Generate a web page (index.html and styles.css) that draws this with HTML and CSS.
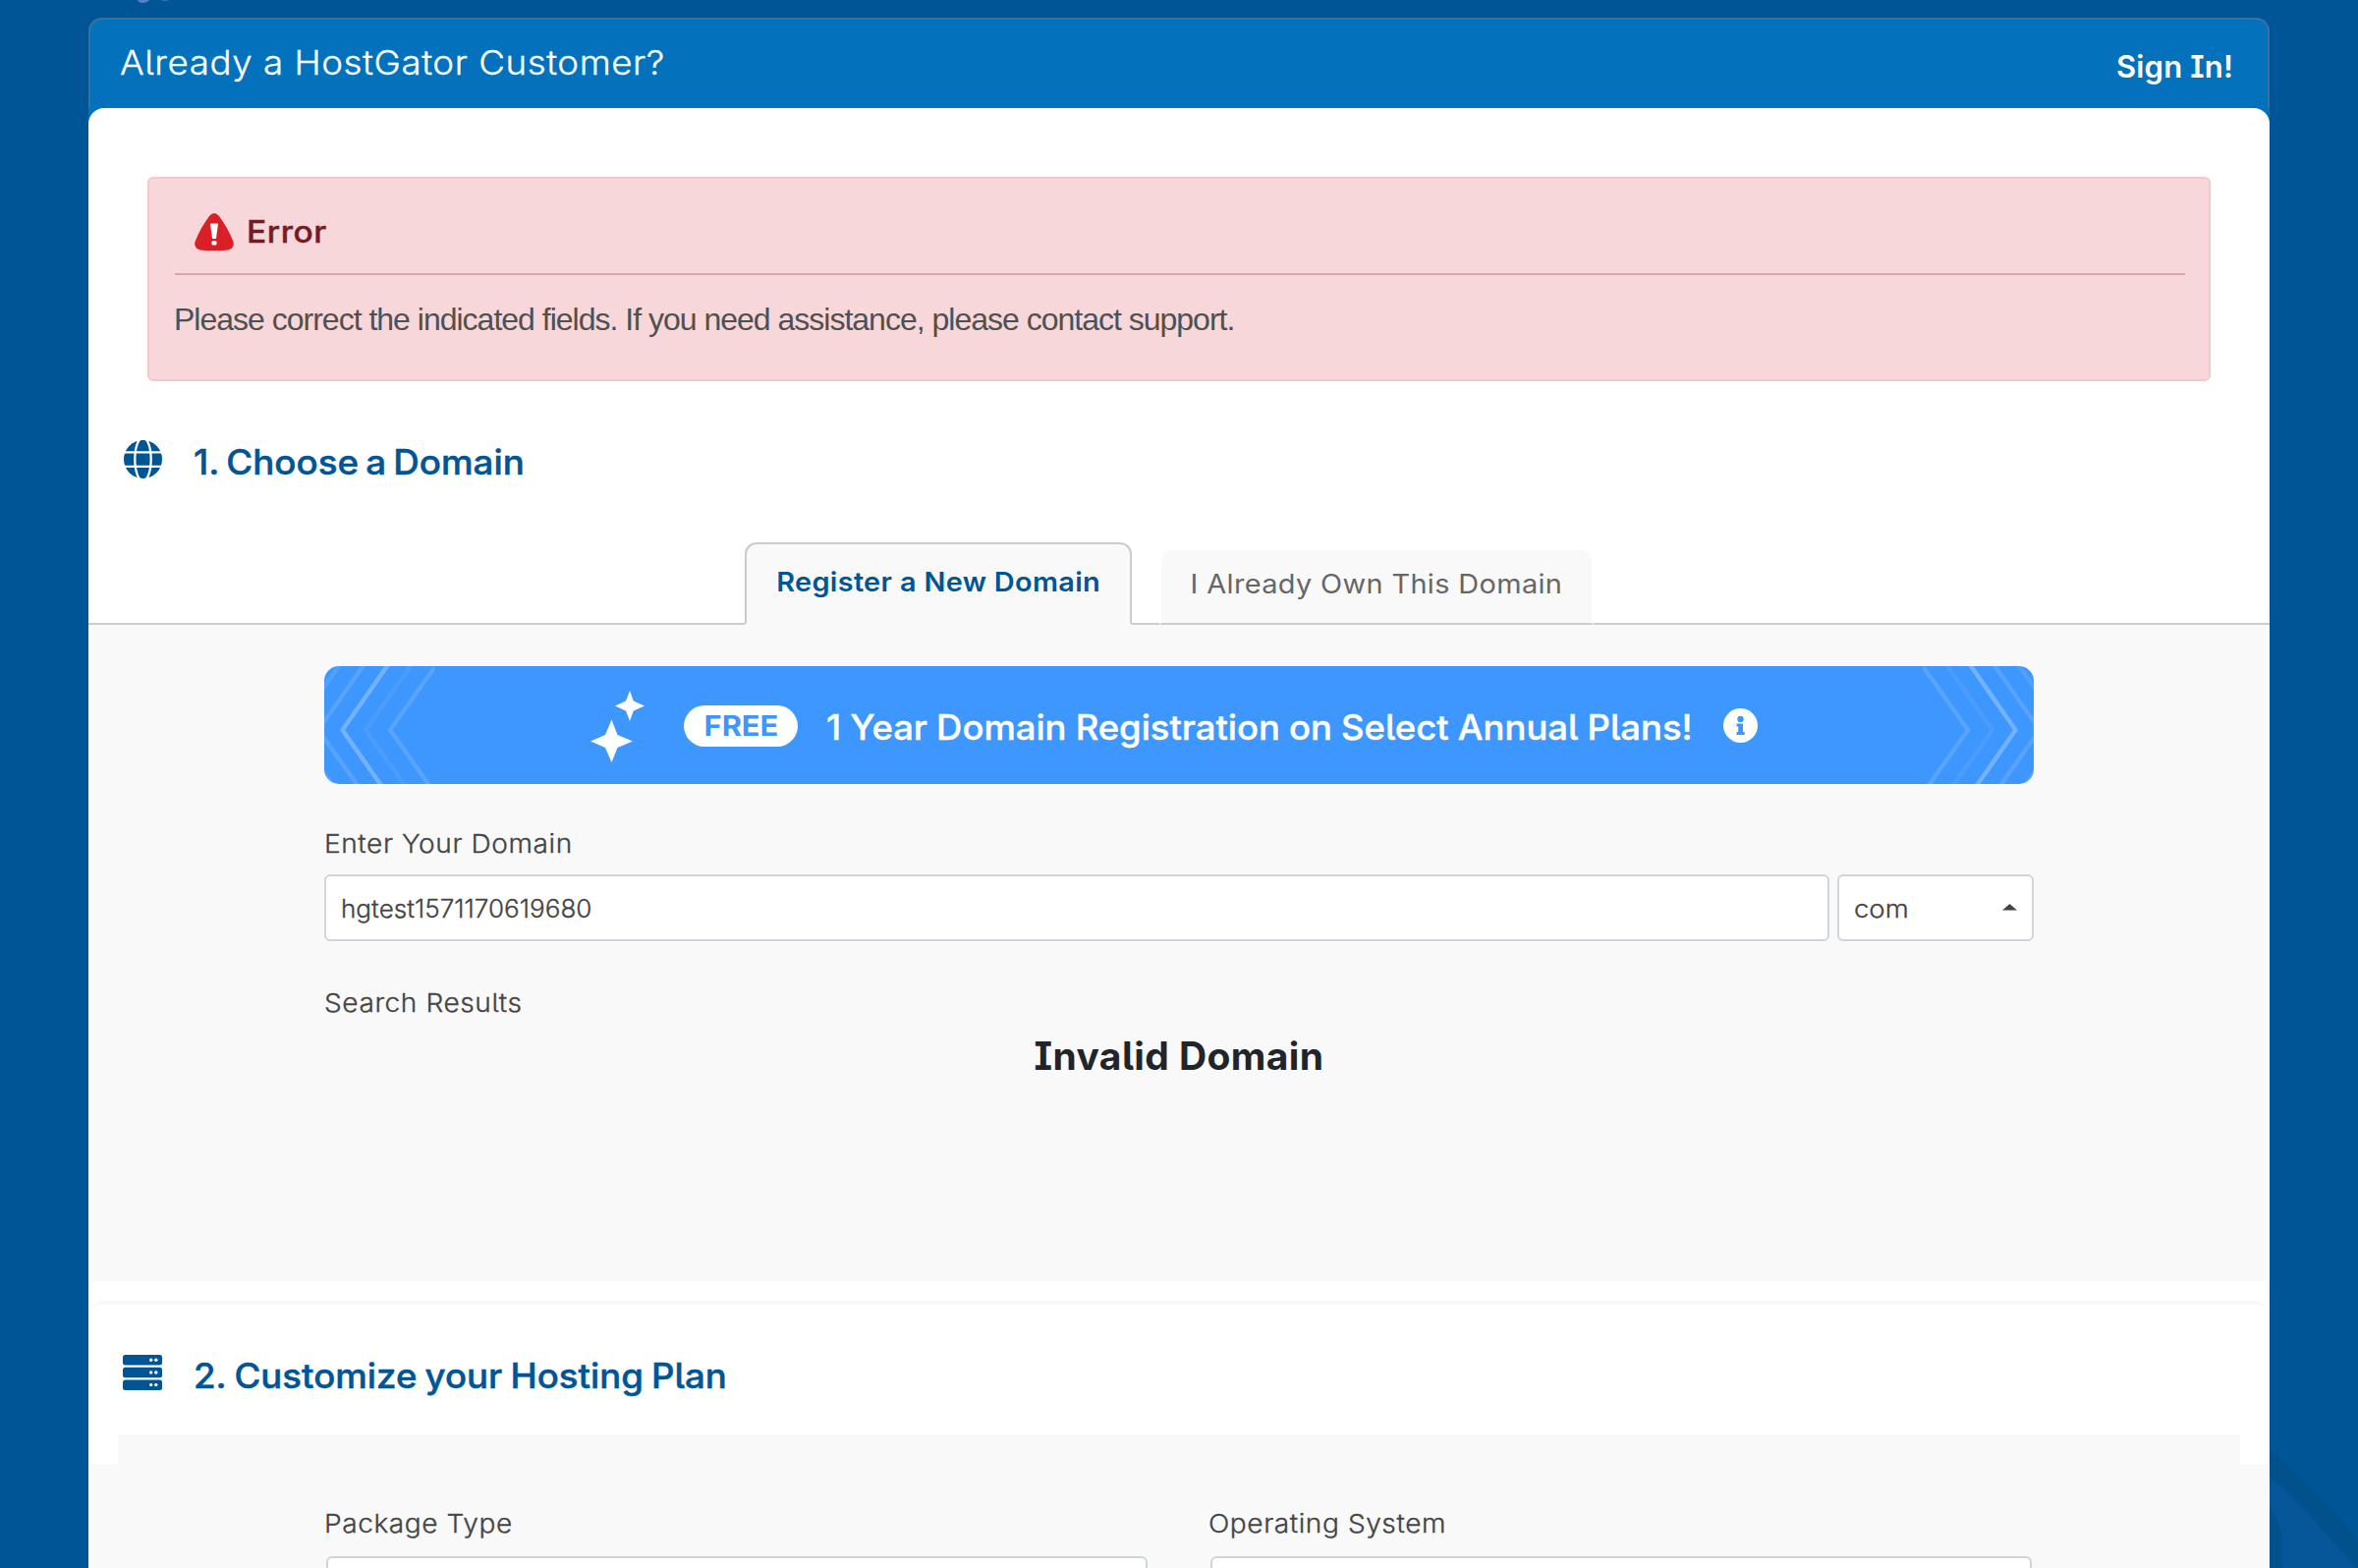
FILE: index.html
```html
<!DOCTYPE html>
<html lang="en">
<head>
<meta charset="utf-8">
<title>HostGator Signup</title>
<link rel="stylesheet" href="styles.css">
</head>
<body>
<svg class="deco-logo" width="40" height="4" viewBox="0 0 40 4"><path d="M0 0H12Q10 3 5 3Q1 3 0 0Z" fill="#4f83c6"/><path d="M24 0H32Q28 2 24 0Z" fill="#3b76bb"/></svg>
<svg class="deco-art" width="90" height="136" viewBox="0 0 90 136"><path d="M0 45L12 54Q45 84 90 136V136H0Z" fill="#055799"/><path d="M0 16Q40 48 90 106V138Q32 70 0 43Z" fill="#00518c"/><path d="M0 73Q13 92 13 112L12 126L20 160H0Z" fill="#00518c"/></svg>
<main class="signup">
  <header class="signin-bar">
    <span class="signin-question">Already a HostGator Customer?</span>
    <a class="signin-link">Sign In!</a>
  </header>
  <div class="card">
    <div class="alert">
      <div class="alert-title">
        <svg width="40" height="38" viewBox="0 0 40 38"><path d="M15 3Q20 -3 25 3Q34 15 39.500 29Q41 36 34 37.500Q20 39 6 37.500Q-1 36 .5 29Q6 15 15 3Z" fill="#db1f26"/><path d="M16 10.500H24L22 26H18Z" fill="#fff"/><rect x="17.500" y="28" width="5" height="4.500" rx="1.500" fill="#fff"/></svg>
        <span class="alert-name">Error</span>
      </div>
      <p class="alert-text">Please correct the indicated fields. If you need assistance, please contact support.</p>
    </div>

    <div class="section-head">
      <svg class="section-icon" width="39" height="39" viewBox="0 0 39 39"><circle cx="19.500" cy="19.500" r="19.500" fill="#005596"/><g fill="none" stroke="#fff" stroke-width="2.300"><path d="M0 12.400H39M0 26.800H39"/><ellipse cx="19.500" cy="19.500" rx="8.200" ry="22"/></g></svg>
      <h2 class="section-title title-domain">1. Choose a Domain</h2>
    </div>

    <nav class="tabs">
      <a class="tab tab-active"><span class="tab-text">Register a New Domain</span></a>
      <a class="tab tab-idle"><span class="tab-text">I Already Own This Domain</span></a>
    </nav>

    <section class="panel">
      <div class="banner">
        <svg class="chevrons" width="120" height="120" viewBox="0 0 120 120"><g fill="none" stroke="#fff" stroke-width="4.500" stroke-linejoin="round" stroke-linecap="round"><path d="M15 0L-31 65L8 120" opacity=".1"/><path d="M39.500 0L-6 65L33 120" opacity=".13"/><path d="M64 0L18.500 65L57 120" opacity=".27"/><path d="M88 0L42 65L81 120" opacity=".07"/><path d="M111 3L67 65L106 120" opacity=".14"/></g></svg>
        <svg class="sparkles" width="56" height="73" viewBox="0 0 56 73"><path fill="#fff" d="M40 0L43.800 10.500L55 15.500L43.800 20.500L40 31L36 20.500L25 15.500L36 10.500ZM21.500 29.500L27.500 45L43 51.500L27.500 58L21.500 73L15 58L0 51.500L15 45Z"/></svg>
        <span class="pill"><span class="pill-text">FREE</span></span>
        <span class="banner-text">1 Year Domain Registration on Select Annual Plans!</span>
        <svg class="info" width="35" height="35" viewBox="0 0 35 35"><circle cx="17.500" cy="17.500" r="17.500" fill="#fff"/><circle cx="17.500" cy="11" r="3.200" fill="#3e96ff"/><path fill="#3e96ff" d="M13.500 15.500H20V24H21.700V27H13.500V24H15.200V18.500H13.500Z"/></svg>
        <svg class="chevrons chevrons-right" width="120" height="120" viewBox="0 0 120 120"><g fill="none" stroke="#fff" stroke-width="4.500" stroke-linejoin="round" stroke-linecap="round"><path d="M15 0L-31 65L8 120" opacity=".1"/><path d="M39.500 0L-6 65L33 120" opacity=".13"/><path d="M64 0L18.500 65L57 120" opacity=".27"/><path d="M88 0L42 65L81 120" opacity=".07"/><path d="M111 3L67 65L106 120" opacity=".14"/></g></svg>
      </div>
      <label class="label domain-label">Enter Your Domain</label>
      <div class="domain-row">
        <div class="field domain-input"><span class="field-text">hgtest1571170619680</span></div>
        <div class="field domain-ext"><span class="field-text ext-text">com</span><svg width="15" height="7" viewBox="0 0 15 7"><path d="M0 6.500L7.500 0L15 6.500Z" fill="#444"/></svg></div>
      </div>
      <div class="label results-label">Search Results</div>
      <h3 class="invalid">Invalid Domain</h3>
    </section>

    <section class="plan">
      <div class="section-head plan-head">
        <svg class="section-icon" width="40" height="36" viewBox="0 0 40 36"><g fill="#005596"><rect width="40" height="10.500" rx="2.500"/><rect y="12.700" width="40" height="10.500" rx="2.500"/><rect y="25.400" width="40" height="10.500" rx="2.500"/></g><g fill="#fff"><circle cx="28.700" cy="5.300" r="1.700"/><circle cx="33.800" cy="5.300" r="1.700"/><circle cx="28.700" cy="18" r="1.700"/><circle cx="33.800" cy="18" r="1.700"/><circle cx="28.700" cy="30.600" r="1.700"/><circle cx="33.800" cy="30.600" r="1.700"/></g></svg>
        <h2 class="section-title title-plan">2. Customize your Hosting Plan</h2>
      </div>
      <div class="plan-lip"></div>
      <div class="plan-body">
        <div class="plan-col"><label class="label">Package Type</label><div class="field"></div></div>
        <div class="plan-col"><label class="label">Operating System</label><div class="field"></div></div>
      </div>
    </section>
  </div>
</main>
</body>
</html>
```
FILE: styles.css
```css
* { box-sizing: border-box; }

body {
  margin: 0;
  height: 1596px;
  overflow: hidden;
  position: relative;
  background: #005596;
  font-family: Inter, "Liberation Sans", sans-serif;
  font-feature-settings: "cv05", "cv08";
  color: #444;
}

h2, h3, p { margin: 0; }
svg { display: block; flex: none; }

/* background artwork */
.deco-logo { position: absolute; left: 140px; top: 0; }
.deco-art { position: absolute; left: 2310px; top: 1460px; }

.signup {
  width: 2220px;
  margin: 18px auto 0 90px;
  background: #0371bc;
  border-radius: 14px 14px 0 0;
  position: relative;
}

/* wide letterforms: text is stretched slightly from its left edge */
.signin-question, .alert-name, .section-title, .banner-text, .label, .field-text {
  transform-origin: 0 50%;
}

.signin-bar {
  height: 92px;
  display: flex;
  justify-content: space-between;
  align-items: center;
  padding: 0 35px 0 30px;
  border: 2px solid #3a7099;
  border-bottom: 0;
  border-radius: 14px 14px 0 0;
  color: #fff;
  white-space: nowrap;
}
.signin-question { font-size: 34px; font-weight: 300; line-height: 40px; margin-bottom: 2px; letter-spacing: .5px; transform: scaleX(1.08); -webkit-text-stroke: .3px; }
.signin-link { font-size: 31px; font-weight: 600; line-height: 40px; padding-top: 5px; letter-spacing: .15px; }

.card { background: #fff; border-radius: 16px 16px 0 0; padding-top: 70px; }

.alert {
  height: 208px;
  margin: 0 60px;
  padding: 0 24px 0 26px;
  background: #f7d7da;
  border: 2px solid #f5c6cb;
  border-radius: 6px;
}
.alert-title {
  height: 98px;
  display: flex;
  align-items: center;
  gap: 13px;
  padding: 12px 0 0 20px;
  border-bottom: 2px solid #dba6a9;
}
.alert-name { font-size: 31px; font-weight: 500; color: #721c24; letter-spacing: .5px; margin-bottom: 2px; transform: scaleX(1.08); -webkit-text-stroke: .4px; }
.alert-text {
  font: 32px/90px "Liberation Sans", Arial, sans-serif;
  letter-spacing: -1px;
  margin-left: -1px;
  color: #505050;
  white-space: nowrap;
}

.section-head { height: 164px; display: flex; align-items: center; padding-left: 36px; color: #005596; }
.section-icon { margin-bottom: 6px; }
.section-title { font-size: 35px; font-weight: 500; line-height: 44px; margin-left: 32px; white-space: nowrap; -webkit-text-stroke: .5px; }
.title-domain { word-spacing: -2.5px; transform: scaleX(1.05); }
.title-plan { word-spacing: -1.5px; transform: scaleX(1.046); }

.tabs {
  height: 84px;
  display: flex;
  align-items: flex-end;
  gap: 28px;
  padding-left: 668px;
  border-bottom: 2px solid #ccc;
}
.tab {
  display: flex;
  align-items: center;
  justify-content: center;
  margin-bottom: -2px;
  background: #f9f9f9;
  border: 2px solid #ccc;
  border-radius: 12px 12px 0 0;
  font-size: 27px;
  font-feature-settings: normal;
  white-space: nowrap;
}
.tab-text { transform: scaleX(1.07); }
.tab-active { width: 394px; height: 84px; border-bottom-color: #f9f9f9; color: #005596; font-weight: 600; letter-spacing: .3px; padding-bottom: 4px; }
.tab-idle { width: 442px; height: 76px; border-color: #fff #fff #ccc; border-top-width: 0; color: #666; letter-spacing: .34px; padding-bottom: 6px; }

.panel { height: 668px; padding: 42px 240px 0; background: #f9f9f9; }

.banner {
  height: 120px;
  display: flex;
  align-items: center;
  background: #3e96ff;
  border-radius: 15px;
  overflow: hidden;
  color: #fff;
}
.chevrons-right { transform: scaleX(-1); margin-left: auto; }
.sparkles { margin-left: 151px; margin-top: 2px; }
.pill {
  width: 116px;
  height: 42px;
  margin-left: 39px;
  margin-top: 2px;
  display: flex;
  align-items: center;
  justify-content: center;
  background: #fff;
  border-radius: 21px;
  color: #3e96ff;
  font-size: 28px;
  font-weight: 700;
  padding-bottom: 1px;
}
.pill-text { transform: scaleX(1.1); }
.banner-text { margin-left: 29px; font-size: 35px; font-weight: 500; white-space: nowrap; width: 881px; padding-top: 3px; word-spacing: -.5px; transform: scaleX(1.04); -webkit-text-stroke: .4px; }
.info { margin-left: 32px; }

.label { display: block; width: max-content; font-size: 26px; font-weight: 300; color: #444; white-space: nowrap; letter-spacing: .52px; transform: scaleX(1.08); -webkit-text-stroke: .3px; }
.domain-label { padding-top: 30px; line-height: 62px; }
.domain-row { display: flex; gap: 8px; }
.field {
  height: 68px;
  display: flex;
  align-items: center;
  background: #fff;
  border: 2px solid #ced4da;
  border-radius: 6px;
  font-size: 25px;
  font-weight: 300;
  color: #444;
}
.field-text { transform: scaleX(1.043); -webkit-text-stroke: .3px; }
.domain-input { width: 1532px; padding-left: 15px; padding-top: 2px; }
.domain-ext { width: 200px; justify-content: space-between; padding: 2px 15px 0 15px; }
.ext-text { transform: scaleX(1.1); }
.domain-ext svg { margin-top: -4px; }
.results-label { padding-top: 45px; line-height: 35px; }
.invalid { text-align: center; font-size: 39px; font-weight: 700; line-height: 73px; color: #212529; letter-spacing: .4px; }

.plan { margin-top: 20px; border-top: 4px solid #f9f9f9; border-radius: 16px 16px 0 0; }
.plan-head { height: 132px; padding: 12px 0 0 35px; }
.plan-lip { height: 30px; margin: 0 30px; background: #f9f9f9; }
.plan-body {
  height: 110px;
  display: grid;
  grid-template-columns: 836px 836px;
  gap: 64px;
  padding: 36px 242px 0;
  background: #f9f9f9;
}
.plan-col .label { line-height: 50px; margin: 0 0 8px -2px; }
```
